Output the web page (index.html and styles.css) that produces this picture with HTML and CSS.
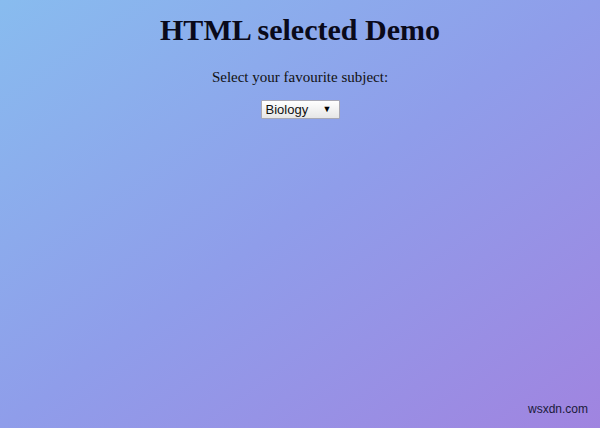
FILE: index.html
```html
<!DOCTYPE html>
<html>
<head>
<meta charset="utf-8">
<link rel="stylesheet" href="styles.css">
</head>
<body>
<main class="page">
  <h1 class="title">HTML selected Demo</h1>
  <p class="prompt">Select your favourite subject:</p>
  <div class="select-wrap">
    <select class="subject">
      <option>Maths</option>
      <option selected>Biology</option>
      <option>Physics</option>
    </select>
    <span class="arrow">▼</span>
  </div>
</main>
<div class="watermark">wsxdn.com</div>
</body>
</html>
```
FILE: styles.css
```css
html, body {
  margin: 0;
  height: 100%;
}
body {
  background: linear-gradient(to bottom right, #88bcef 0%, #8f9dea 50%, #a084e0 100%);
  font-family: "Liberation Serif", "Times New Roman", serif;
  color: #000;
  overflow: hidden;
}
.page {
  display: flex;
  flex-direction: column;
  align-items: center;
  padding-top: 12px;
}
.title {
  margin: 0;
  font-size: 30px;
  font-weight: bold;
  line-height: 36px;
  color: #0a0a1a;
}
.prompt {
  margin: 19px 0 0;
  font-size: 15px;
  line-height: 20px;
  color: #111;
}
.select-wrap {
  position: relative;
  margin-top: 13px;
  width: 79px;
  height: 19px;
}
.subject {
  appearance: none;
  -webkit-appearance: none;
  width: 79px;
  height: 19px;
  box-sizing: border-box;
  margin: 0;
  padding: 0 0 0 4px;
  border: 1px solid #a8a8b4;
  border-radius: 1px;
  background: linear-gradient(to bottom, #ffffff, #e6e6e6);
  font-family: "Liberation Sans", Arial, sans-serif;
  font-size: 13px;
  color: #111;
}
.arrow {
  position: absolute;
  right: 8px;
  top: 4px;
  font-size: 9px;
  line-height: 10px;
  color: #000;
  pointer-events: none;
}
.watermark {
  position: absolute;
  right: 12px;
  bottom: 12px;
  font-family: "Liberation Sans", Arial, sans-serif;
  font-size: 12px;
  color: #1a1a3a;
}
```
